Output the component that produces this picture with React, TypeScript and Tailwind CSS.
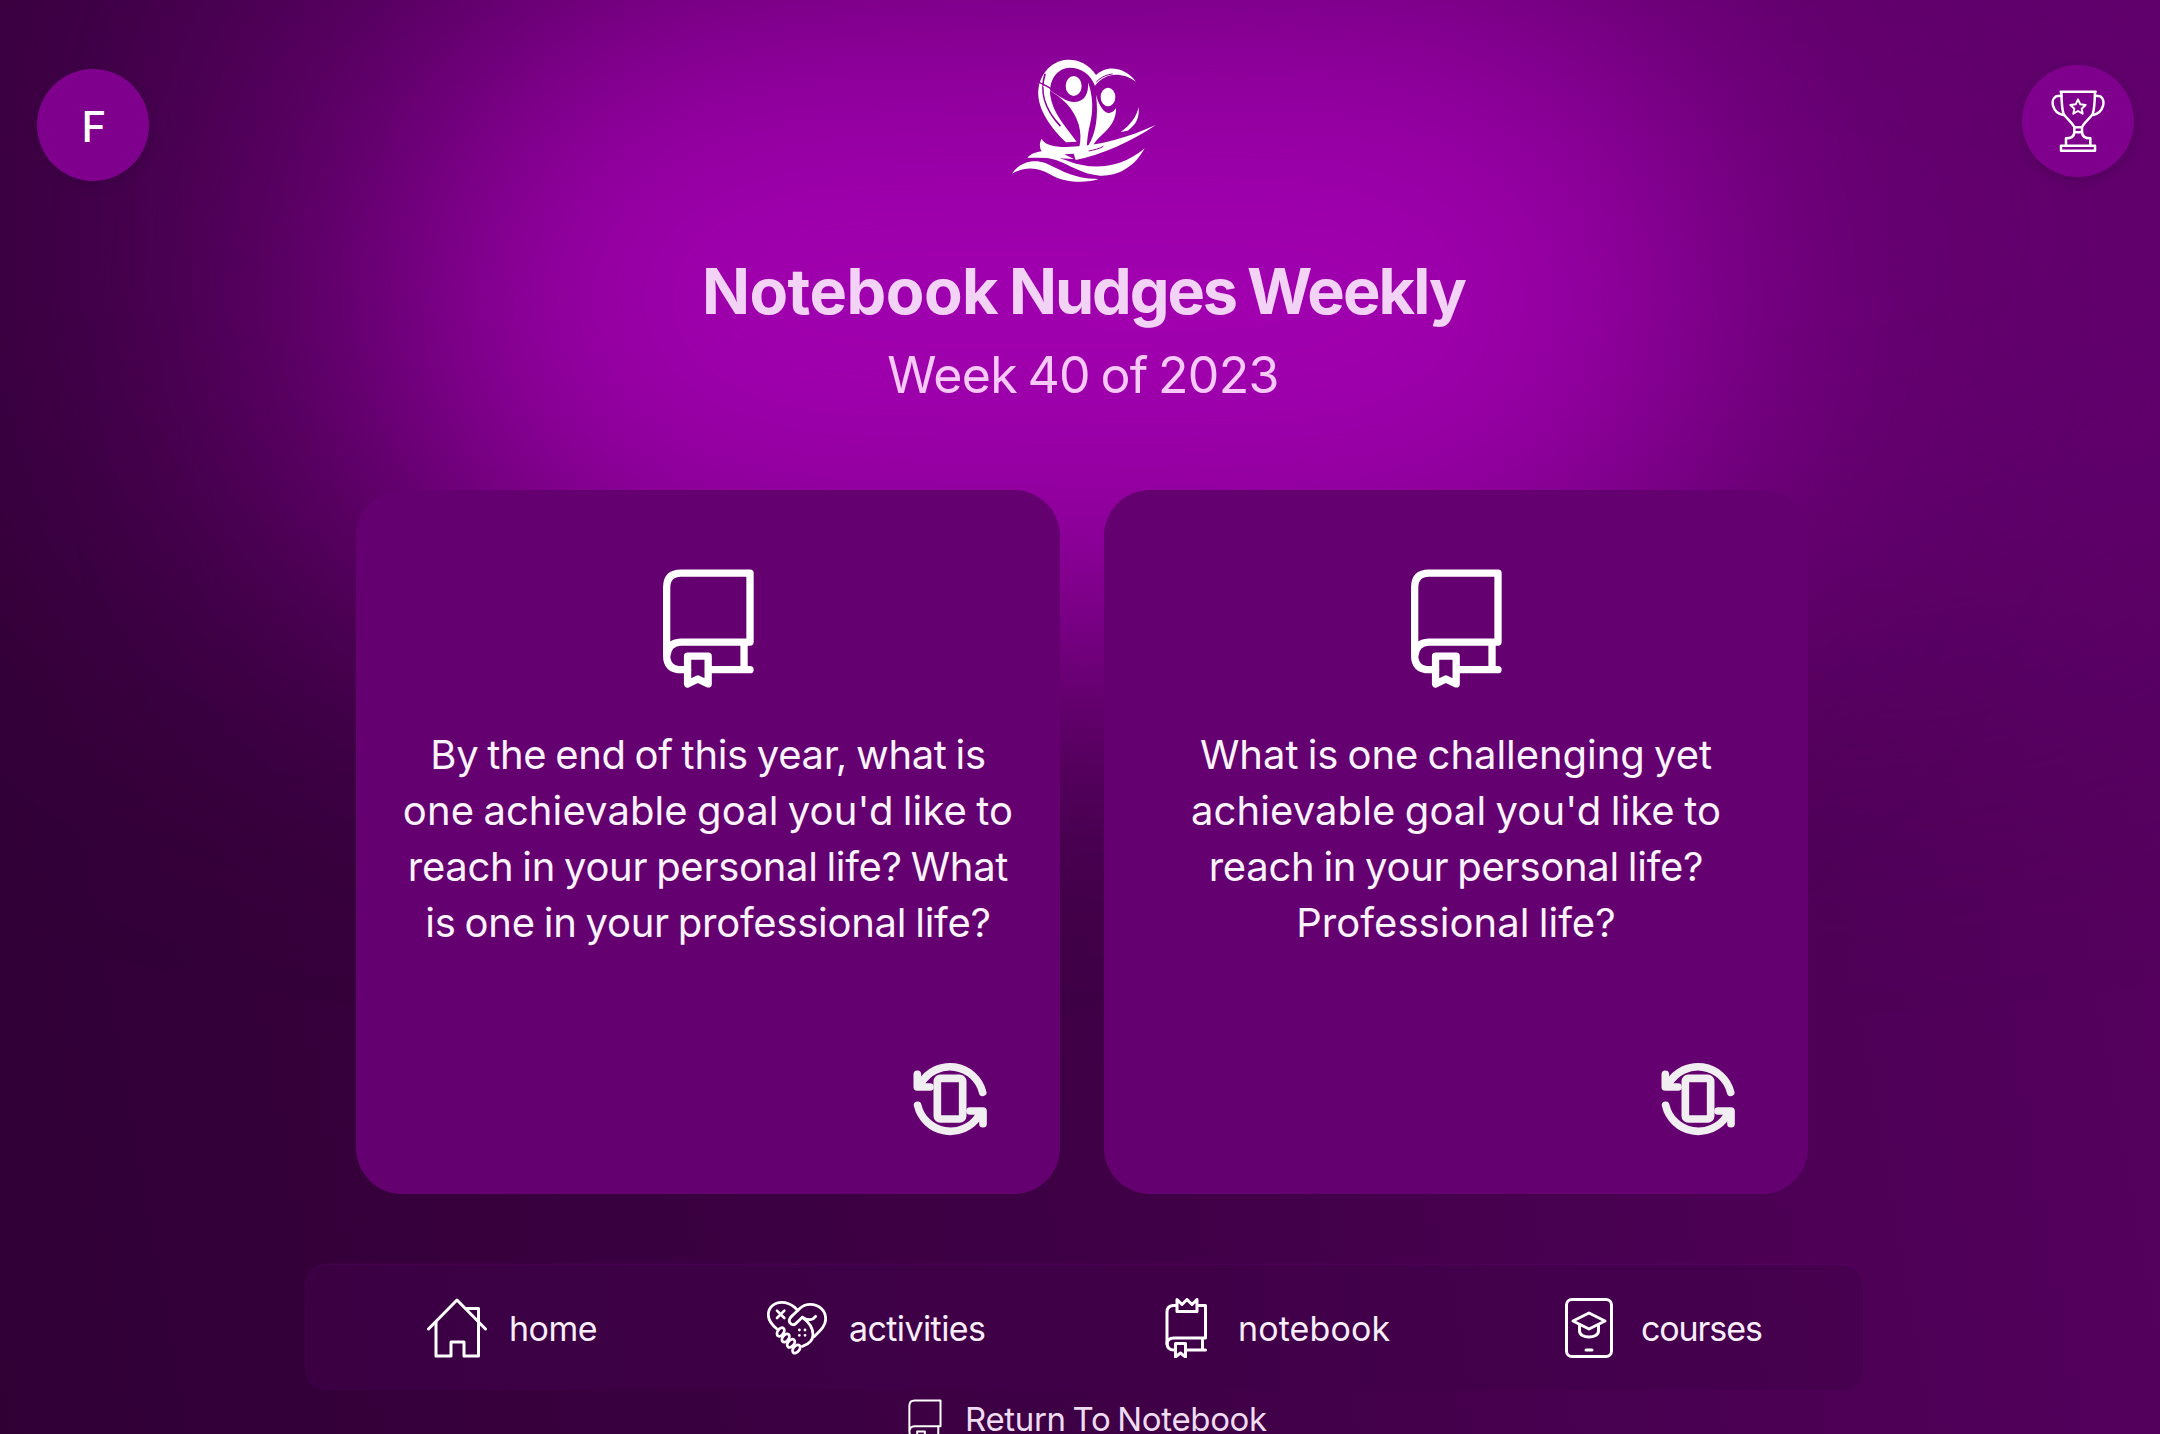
import React from 'react';
import clsx from 'clsx';

function Logo() {
  return (
    <svg className="h-[124px] w-[144px]" viewBox="38 58 432 372" fill="#fff">
      <path d="M290 106 C268 72 235 59 205 60 C150 63 114 112 117 168 C120 216 158 268 200 308 L232 306 C200 262 160 220 153 168 C148 118 176 84 212 84 C245 84 274 104 287 138 C310 108 355 88 410 126 C385 92 352 84 328 87 C314 89 300 96 290 106 Z" />
      <path d="M137 104 C122 150 132 205 182 258" fill="none" stroke="#8e009a" strokeWidth="5" strokeLinecap="round" />
      <path d="M291 127 C305 112 322 105 340 103" fill="none" stroke="#8e009a" strokeWidth="3" />
      <path d="M112 124 C130 134 146 140 160 150" fill="none" stroke="#8e009a" strokeWidth="4" />
      <ellipse cx="223" cy="139" rx="24" ry="30" />
      <path d="M110 129 C158 147 185 184 224 187 C256 188 269 160 266 128 C281 168 283 214 271 258 C264 288 264 305 262 322 L240 322 C250 278 238 230 200 190 C172 162 145 148 110 129 Z" />
      <ellipse cx="326" cy="172" rx="22" ry="28" />
      <path d="M290 165 C300 203 318 222 330 220 C342 218 350 208 350 203 C352 240 332 265 305 288 C294 298 286 308 280 320 L266 320 C290 280 298 230 290 165 Z" />
      <path d="M418 203 C421 236 408 258 385 273 L364 277 C394 256 411 232 418 203 Z" />
      <path d="M127 297 C135 314 162 322 200 322 C300 320 390 292 469 256 C400 304 305 346 229 361 L223 342 L195 344 L224 358 L150 354 L84 354 C98 341 112 337 127 335 C119 322 121 306 127 297 Z" />
      <path d="M268 334 C285 331 300 327 312 320" fill="none" stroke="#930099" strokeWidth="3" />
      <path d="M84 353 C130 338 170 350 208 365 C270 388 355 394 436 326 C402 388 350 410 302 408 C250 405 212 376 172 362 C140 352 112 350 84 353 Z" />
      <path d="M38 402 C60 368 100 357 138 370 C182 388 215 417 298 418 C262 430 200 430 160 408 C122 386 85 376 38 402 Z" />
    </svg>
  );
}

function TrophyIcon() {
  return (
    <svg className="h-[62px] w-[54px]" viewBox="153 121 162 186" fill="none" stroke="#fff" strokeWidth="7.5" strokeLinejoin="round" strokeLinecap="round">
      <path d="M182 126 H287 M184 126 C185 155 185 175 190 190 C194 203 212 212 223 232 M285 126 C284 155 284 175 279 190 C275 203 257 212 246 232" />
      <path d="M184 138 C177 138 173 138 168 140 C150 150 156 190 190 196 M285 138 C292 138 296 138 301 140 C318 150 312 190 279 196" />
      <path d="M223 233 H246 V248 H223 Z" />
      <path d="M223 248 C222 262 212 266 198 266 V287 M246 248 C247 262 257 266 271 266 V287" />
      <path d="M183 288 H285 V303 H183 Z" />
      <path strokeWidth="6" d="M234 149 L241 164 L257 166 L245 177 L248 192 L234 184 L220 192 L223 177 L211 166 L227 164 Z" />
    </svg>
  );
}

function BookIcon({ className, thin = false }: { className: string; thin?: boolean }) {
  return (
    <svg className={className} viewBox="68 58 274 358" fill="none" stroke="currentColor" strokeWidth={thin ? 16 : 22} strokeLinejoin="round" strokeLinecap="round">
      <path d="M142 361 H124 Q79 361 79 318 V114 Q79 70 122 70 H330 V278 H122 Q82 280 80 318" />
      <path d="M312 280 V361 M214 361 H330" />
      <path d="M142 320 H204 V404 L173 389 L142 404 Z" />
    </svg>
  );
}

function FlipIcon() {
  return (
    <svg className="h-[74px] w-[74px]" viewBox="69 66 222 222" fill="none" stroke="#f1eef2" strokeWidth="23" strokeLinejoin="round" strokeLinecap="round">
      <rect x="142" y="115" width="76" height="122" rx="9" />
      <path d="M278 157 A101 101 0 0 0 93 130" />
      <path d="M82 103 V141 H120" />
      <path d="M83 196 A101 101 0 0 0 266 228" />
      <path d="M240 213 H279 V251" />
    </svg>
  );
}

function HomeIcon() {
  return (
    <svg className="size-[60px] shrink-0" viewBox="427 1298 60 60" fill="none" stroke="#fff" strokeWidth="3" strokeLinejoin="round" strokeLinecap="round">
      <path d="M428.5 1329 L457 1300 L485.500 1329" />
      <path d="M436 1322 V1356 H451 V1342 H464 V1356 H478.500 V1308.500 H467" />
    </svg>
  );
}

function ActivitiesIcon() {
  return (
    <svg className="size-[60px] shrink-0" viewBox="52 54 180 180" fill="none" stroke="#fff" strokeWidth="8.5" strokeLinejoin="round" strokeLinecap="round">
      <path d="M82 147 C66 134 56 122 56 105 C56 82 74 67 96 67 C114 67 127 75 136 83 L144 91" />
      <path d="M158 112 L138 131 C129 139 115 130 120 117 C122 112 126 108 130 105 L152 84 C161 76 170 73 182 73 C208 73 228 92 228 117 C228 136 216 148 193 170" />
      <path d="M158 112 C178 126 190 142 190 164 C190 182 178 192 158 199" />
      <path d="M162 114 C176 122 190 120 198 109" />
      <path d="M82 92 L104 114 M104 92 L82 114" strokeWidth="8" />
      <ellipse cx="93" cy="156" rx="9" ry="14" transform="rotate(35 93 156)" />
      <ellipse cx="108" cy="174" rx="9" ry="14" transform="rotate(38 108 174)" />
      <ellipse cx="124" cy="190" rx="9" ry="14" transform="rotate(40 124 190)" />
      <ellipse cx="140" cy="207" rx="9" ry="14" transform="rotate(40 140 207)" />
      <path d="M149 150 h.1 M166 150 h.1 M149 166 h.1 M166 166 h.1" />
    </svg>
  );
}

function NotebookIcon() {
  return (
    <svg className="size-[60px] shrink-0" viewBox="1155 1298 60 60" fill="none" stroke="#fff" strokeWidth="3" strokeLinejoin="round" strokeLinecap="round">
      <path d="M1176.500 1305.500 H1173 Q1167 1306 1167 1312 V1343 Q1167 1350 1174 1350" />
      <path d="M1197.500 1305.500 H1205.500 V1338 H1174 Q1167 1338 1167 1344 M1202.500 1338 V1350 M1187 1350 H1205.500" />
      <path d="M1177 1299.500 L1182 1304.500 L1187 1299.500 L1192 1304.500 L1197 1299.500 V1311.500 H1177 Z" />
      <path d="M1175.500 1343.500 H1185.500 V1357 L1180.500 1353 L1175.500 1357 Z" />
    </svg>
  );
}

function CoursesIcon() {
  return (
    <svg className="size-[60px] shrink-0" viewBox="1558 1298 60 60" fill="none" stroke="#fff" strokeWidth="3" strokeLinejoin="round" strokeLinecap="round">
      <rect x="1566.500" y="1299.500" width="45" height="57" rx="5.500" />
      <path d="M1573 1321 L1589 1313 L1605 1321 L1589 1329 Z" />
      <path d="M1579.500 1325.500 V1331 C1579.500 1339 1598.500 1339 1598.500 1331 V1325.500" />
      <path d="M1586 1350 H1592" />
    </svg>
  );
}

type Line = { text: string; tracking: string };

const cards: Line[][] = [
  [
    { text: 'By the end of this year, what is', tracking: 'tracking-[-0.33px]' },
    { text: "one achievable goal you'd like to", tracking: 'tracking-[0.09px]' },
    { text: 'reach in your personal life? What', tracking: 'tracking-[-0.3px]' },
    { text: 'is one in your professional life?', tracking: 'tracking-[-0.26px]' },
  ],
  [
    { text: 'What is one challenging yet', tracking: 'tracking-[-0.04px]' },
    { text: "achievable goal you'd like to", tracking: 'tracking-[0.1px]' },
    { text: 'reach in your personal life?', tracking: 'tracking-[-0.28px]' },
    { text: 'Professional life?', tracking: 'tracking-[0.05px]' },
  ],
];

const navItems = [
  { label: 'home', Icon: HomeIcon, size: 'w-[170px]', tracking: 'tracking-[-0.5px]' },
  { label: 'activities', Icon: ActivitiesIcon, size: 'w-[218px]', tracking: 'tracking-[-0.6px]' },
  { label: 'notebook', Icon: NotebookIcon, size: 'w-[233px]', tracking: 'ml-px tracking-[0.1px]' },
  { label: 'courses', Icon: CoursesIcon, size: 'w-[203px]', tracking: 'ml-px tracking-[-1.1px]' },
];

function NudgeCard({ lines }: { lines: Line[] }) {
  return (
    <article className="flex size-[704px] flex-col items-center rounded-[46px] bg-[#64006f] pt-[79px] pb-[58px]">
      <BookIcon className="h-[119px] w-[91px] shrink-0 text-white" />
      <p className="mt-[39px] text-center text-[40px] leading-[56px] text-[#fbf3fc] [word-spacing:-2px]">
        {lines.map((line) => (
          <span key={line.text} className={clsx('block whitespace-nowrap', line.tracking)}>
            {line.text}
          </span>
        ))}
      </p>
      <button className="mt-auto mr-[73px] self-end" aria-label="Flip card">
        <FlipIcon />
      </button>
    </article>
  );
}

export default function App() {
  return (
    <div className="relative isolate h-[1434px] w-full overflow-hidden bg-linear-80 from-[#300035] via-[#400047] to-[#580062] font-['Inter',sans-serif]">
      <div className="absolute top-[-200px] left-[60px] -z-10 h-[860px] w-[2240px] rounded-[300px] bg-[#7c008a]/35 blur-[160px]" />
      <div className="absolute top-[-30px] left-[400px] -z-10 h-[660px] w-[1330px] rounded-[320px] bg-[#a100af] blur-[155px]" />

      <header className="flex h-[182px] items-start justify-between pr-[26px] pl-[37px]">
        <div className="mt-[69px] flex size-[112px] items-center justify-center rounded-full bg-[#80008e] pt-[2px] pl-[2px] text-[42px] font-medium text-white shadow-[0_4px_12px_rgba(40,0,50,0.25)]">
          F
        </div>
        <div className="mt-[59px] mr-[3px]">
          <Logo />
        </div>
        <div className="mt-[65px] flex size-[112px] items-center justify-center rounded-full bg-[#80008e] shadow-[0_4px_12px_rgba(40,0,50,0.25)]">
          <TrophyIcon />
        </div>
      </header>

      <main className="flex flex-col items-center">
        <h1 className="mt-[69px] ml-[7px] text-[63px] leading-[80px] font-bold whitespace-nowrap text-[#f3d3f5] [word-spacing:-4px]">
          <span className="tracking-[-0.5px]">Notebook</span> <span className="tracking-[-2.1px]">Nudges</span>{' '}
          <span className="tracking-[-1.9px]">Weekly</span>
        </h1>
        <h2 className="mt-[12px] ml-[6px] text-[50px] leading-[64px] tracking-[-0.65px] whitespace-nowrap text-[#f7c9f9] [word-spacing:-3px]">
          Week 40 of 2023
        </h2>
        <div className="mt-[83px] ml-[4px] flex gap-[44px]">
          {cards.map((lines, i) => (
            <NudgeCard key={i} lines={lines} />
          ))}
        </div>
      </main>

      <nav className="mt-[71px] ml-[306px] flex h-[125px] w-[1557px] items-center gap-[170px] rounded-[20px] bg-[#400048]/55 pl-[121px] shadow-[0_-1px_2px_rgba(110,0,125,0.35)]">
        {navItems.map(({ label, Icon, size, tracking }) => (
          <a key={label} className={clsx('flex items-center gap-[22px] text-[34px] text-[#f8eef9]', size)}>
            <Icon />
            <span className={clsx('mt-px whitespace-nowrap', tracking)}>{label}</span>
          </a>
        ))}
      </nav>

      <a className="mt-[9px] ml-[908px] flex items-start gap-[23px] text-[#eedcf0]">
        <BookIcon className="h-[44.5px] w-[34px] text-white" thin />
        <span className="text-[33px] leading-[40px] tracking-[-0.35px] whitespace-nowrap [word-spacing:-2px]">Return To Notebook</span>
      </a>
    </div>
  );
}
